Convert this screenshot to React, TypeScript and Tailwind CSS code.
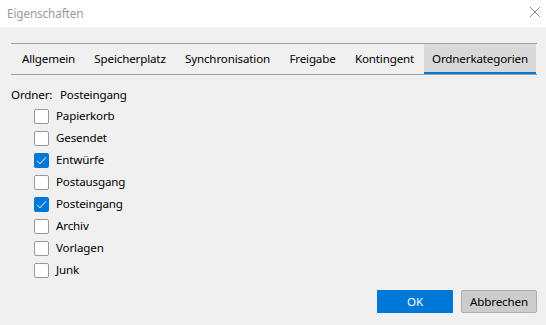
import React from "react";

const tabs = [
  { label: "Allgemein", w: "w-[73px]" },
  { label: "Speicherplatz", w: "w-[90px]" },
  { label: "Synchronisation", w: "w-[105px]" },
  { label: "Freigabe", w: "w-[65px]" },
  { label: "Kontingent", w: "w-[79px]" },
  { label: "Ordnerkategorien", w: "w-[112px]", active: true },
];

const items = [
  { label: "Papierkorb", checked: false },
  { label: "Gesendet", checked: false },
  { label: "Entwürfe", checked: true },
  { label: "Postausgang", checked: false },
  { label: "Posteingang", checked: true },
  { label: "Archiv", checked: false },
  { label: "Vorlagen", checked: false },
  { label: "Junk", checked: false },
];

function Box({ checked }: { checked: boolean }) {
  if (checked) {
    return (
      <div className="w-[15px] h-[15px] rounded-[2px] bg-[#0078d7] flex items-center justify-center">
        <svg width="13" height="13" viewBox="0 0 13 13">
          <path d="M2 6.8 L5 9.8 L11 3.2" fill="none" stroke="#ffffff" strokeWidth="1" />
        </svg>
      </div>
    );
  }
  return <div className="w-[15px] h-[15px] rounded-[2px] bg-white border border-[#999999]" />;
}

export default function App() {
  return (
    <div
      className="w-[546px] h-[325px] bg-[#f0f0f0] text-black text-[11.6px] tracking-[-0.15px] overflow-hidden flex flex-col"
      style={{ fontFamily: '"Noto Sans", "Liberation Sans", sans-serif' }}
    >
      <div className="h-[27px] bg-white flex items-center justify-between pl-[7px] pr-[5px] shrink-0">
        <span className="text-[#9a9a9a] text-[11.8px]">Eigenschaften</span>
        <svg width="12" height="12" viewBox="0 0 12 12" className="mb-[3px]">
          <path d="M1 1 L11 11 M11 1 L1 11" stroke="#8a8a8a" strokeWidth="1" />
        </svg>
      </div>

      <div className="mt-[16px] ml-[11px] mr-[9px] border-t border-b border-[#a0a0a0] flex h-[32px] shrink-0">
        <div className="w-[1px]" />
        {tabs.map((t) => (
          <div
            key={t.label}
            className={`${t.w} h-[30px] flex items-center justify-center ${
              t.active ? "bg-[#d9d9d9] border-b-2 border-[#0078d7]" : ""
            }`}
          >
            <span className={t.active ? "mt-[2px]" : ""}>{t.label}</span>
          </div>
        ))}
      </div>

      <div className="mt-[12px] ml-[11px] h-[16px] flex items-center">
        <span className="w-[49px]">Ordner:</span>
        <span>Posteingang</span>
      </div>

      <div className="mt-[2px] pl-[34px] flex flex-col">
        {items.map((it) => (
          <div key={it.label} className="h-[22px] flex items-center gap-[7px]">
            <Box checked={it.checked} />
            <span>{it.label}</span>
          </div>
        ))}
      </div>

      <div className="mt-[9px] flex justify-end gap-[8px] pr-[9px]">
        <button className="w-[76px] h-[23px] bg-[#0078d7] text-white flex items-center justify-center">
          OK
        </button>
        <button className="w-[76px] h-[23px] bg-[#cccccc] border border-[#adadad] rounded-[2px] flex items-center justify-center">
          Abbrechen
        </button>
      </div>
    </div>
  );
}
